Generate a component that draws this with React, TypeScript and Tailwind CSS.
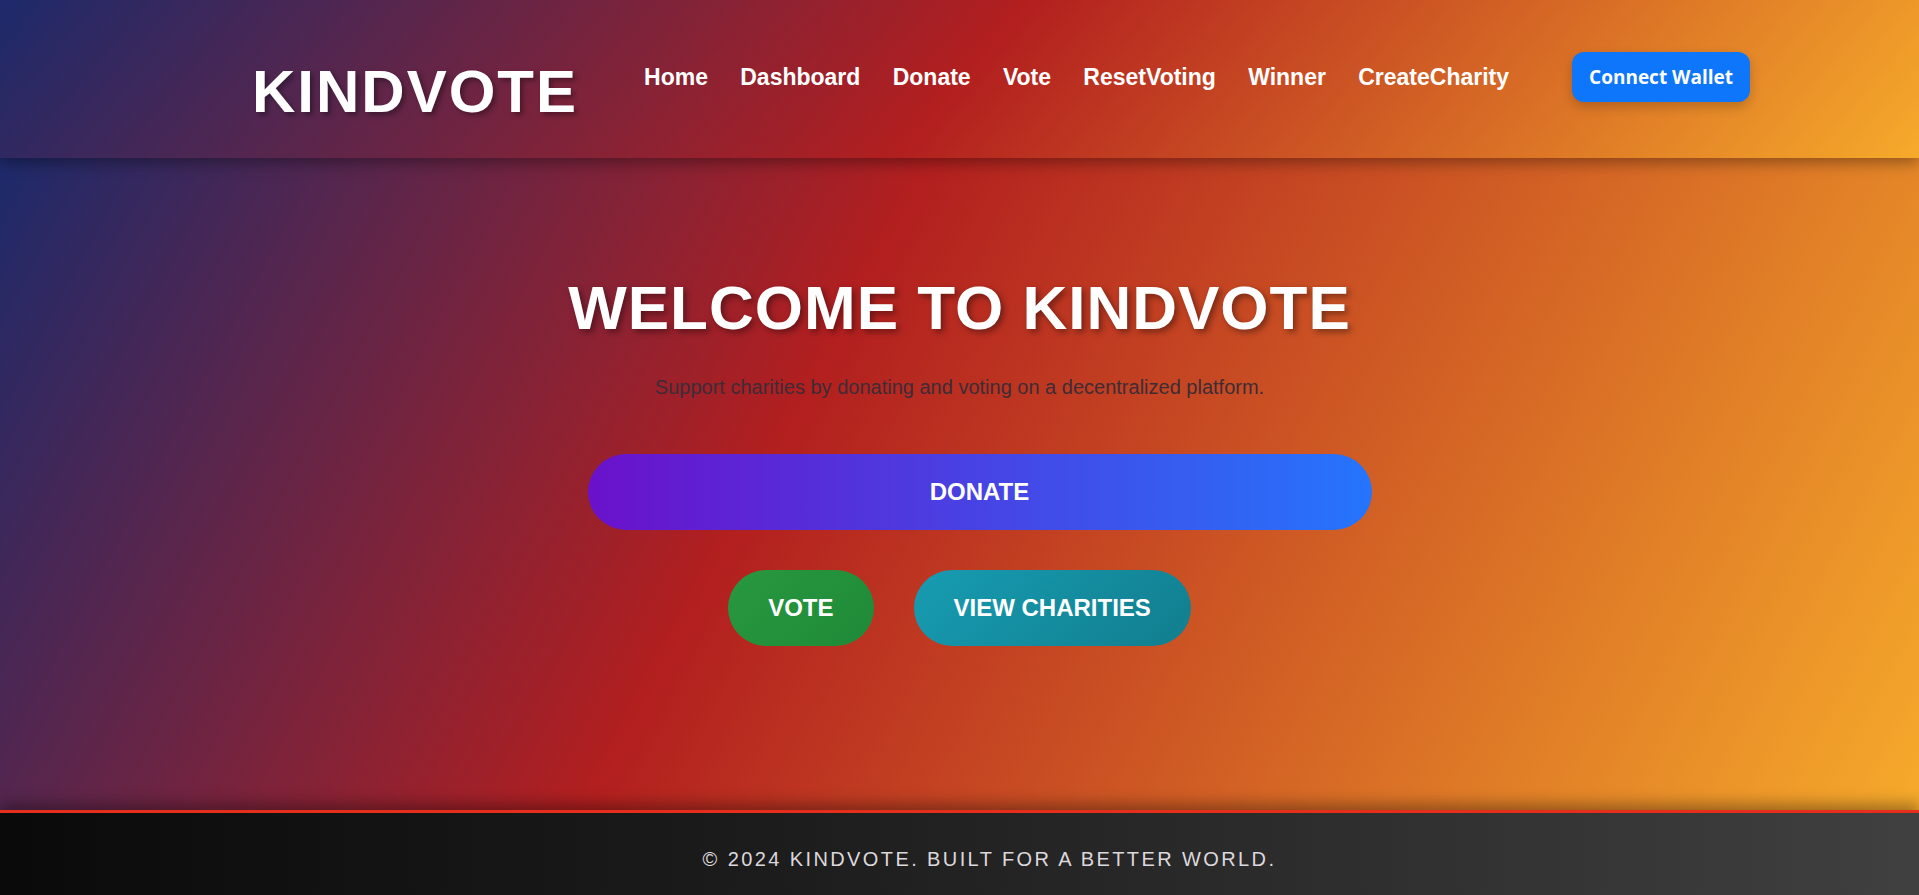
import type { ReactNode } from 'react'

// --- Data -------------------------------------------------------------------

const navLinks = ['Home', 'Dashboard', 'Donate', 'Vote', 'ResetVoting', 'Winner', 'CreateCharity']

// --- Pieces -----------------------------------------------------------------

function PillButton({ className, children }: { className: string; children: ReactNode }) {
  return (
    <button
      type="button"
      className={`h-[76px] rounded-full text-[24px] leading-[28px] font-bold text-white ${className}`}
    >
      {children}
    </button>
  )
}

// --- Component --------------------------------------------------------------

export default function App() {
  return (
    <div className="flex h-screen flex-col overflow-hidden font-['Liberation_Sans',Arial,sans-serif]">
      {/* Header */}
      <header className="relative z-10 flex h-[158px] shrink-0 items-center pb-[4px] pl-[252px] bg-[linear-gradient(130deg,#1d2a6b_0%,#b21f1f_50%,#f6aa2b_100%)] shadow-[0_5px_14px_rgba(0,0,0,0.35)]">
        <h1 className="mt-[28px] text-[60px] leading-[69px] font-bold tracking-[2px] text-white [text-shadow:3px_3px_5px_rgba(0,0,0,0.35)]">
          KINDVOTE
        </h1>

        <nav className="ml-[66px] flex gap-[32.3px]">
          {navLinks.map((link) => (
            <a key={link} href="#" className="text-[23px] leading-[26px] font-bold text-white">
              {link}
            </a>
          ))}
        </nav>

        <button
          type="button"
          className="ml-[63px] h-[50px] w-[178px] rounded-[12px] bg-[#0e76fb] font-['Open_Sans',sans-serif] text-[19px] font-bold text-white shadow-[0_5px_12px_rgba(0,0,0,0.2)]"
        >
          Connect Wallet
        </button>
      </header>

      {/* Hero */}
      <main className="flex flex-1 flex-col items-center pt-[114px] bg-[linear-gradient(118deg,#1d2a6b_0%,#b21f1f_41%,#f6aa2b_100%)]">
        <h2 className="text-[62px] leading-[71px] font-bold tracking-[1px] text-white [text-shadow:3px_3px_6px_rgba(0,0,0,0.4)]">
          WELCOME TO KINDVOTE
        </h2>
        <p className="mt-[33px] text-[20px] leading-[23px] text-[#3d2c35]">
          Support charities by donating and voting on a decentralized platform.
        </p>

        <PillButton className="mt-[55px] ml-[40px] w-[784px] bg-[linear-gradient(90deg,#6a11cb,#2575fc)]">
          DONATE
        </PillButton>

        <div className="mt-[40px] flex gap-10">
          <PillButton className="px-10 bg-[linear-gradient(135deg,#28983f,#1f8a38)]">VOTE</PillButton>
          <PillButton className="px-10 bg-[linear-gradient(135deg,#179cb2,#117e8e)]">VIEW CHARITIES</PillButton>
        </div>
      </main>

      {/* Footer */}
      <footer className="h-[85px] shrink-0 border-t-[3px] border-[#e52e1c] pt-[35px] pl-[60px] text-center bg-[linear-gradient(90deg,#0a0a0a_0%,#1c1c1c_40%,#404040_100%)] shadow-[0_-6px_14px_rgba(0,0,0,0.35)]">
        <p className="text-[20px] leading-[23px] tracking-[2.4px] text-[#ddd8dd]">
          © 2024 KINDVOTE. BUILT FOR A BETTER WORLD.
        </p>
      </footer>
    </div>
  )
}
